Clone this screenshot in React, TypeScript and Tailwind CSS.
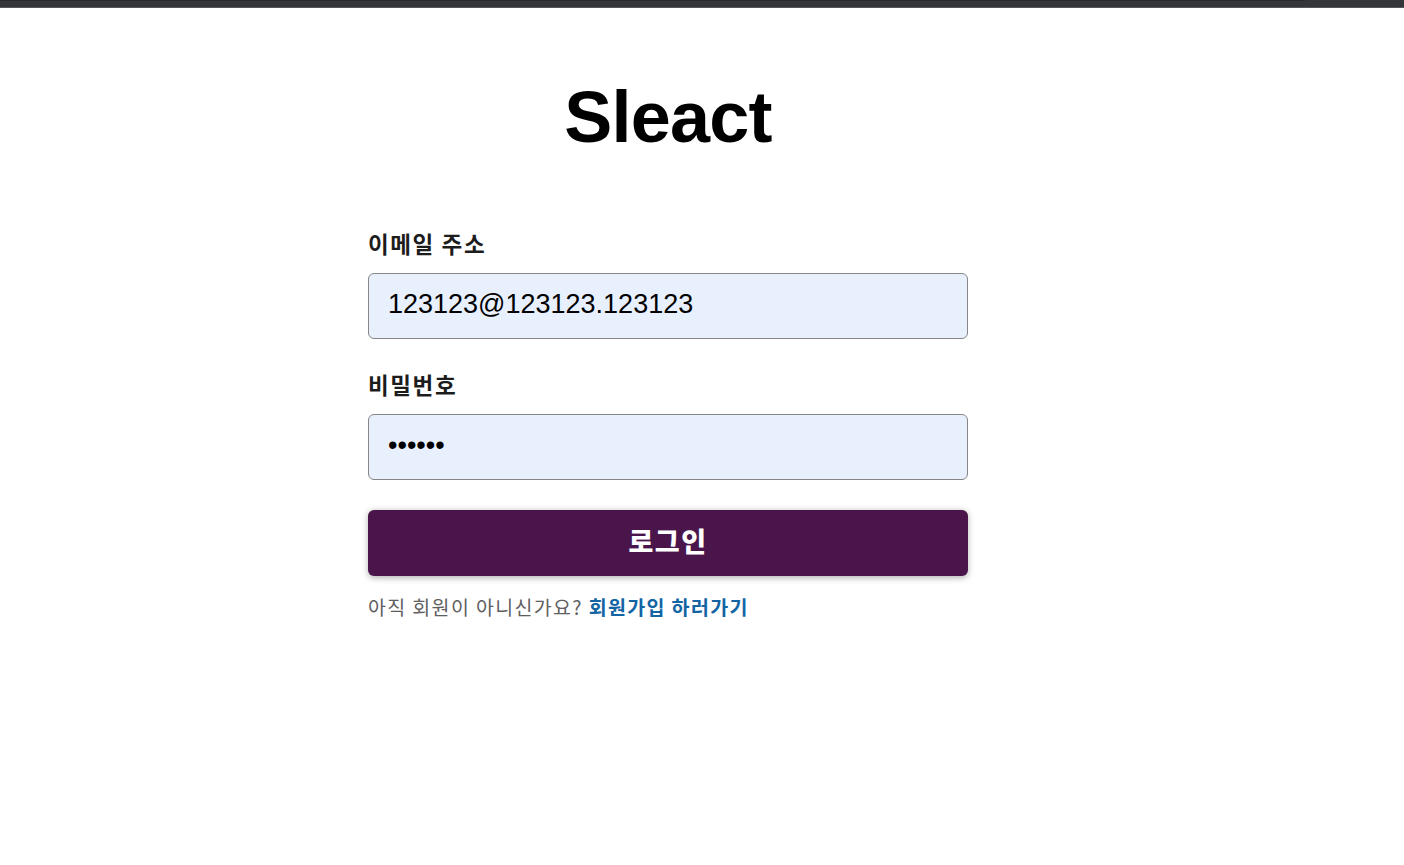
import { useState } from "react"

export default function App() {
  const [email, setEmail] = useState("123123@123123.123123")
  const [password, setPassword] = useState("123123")

  return (
    <div className="min-h-screen w-full bg-white font-['Liberation_Sans','Noto_Sans_CJK_KR',sans-serif]">
      {/* browser chrome edge */}
      <div className="flex h-[7px] flex-col bg-[#35363a]">
        <div className="h-[1px] w-[1305px] bg-[#28292c]" />
      </div>
      <div className="h-[1px] bg-[#55565a]" />

      <div className="w-[1336px]">
        <header className="mt-[75px] mb-[75px] text-center text-[72px] font-bold leading-[69px] tracking-[-0.75px] text-black">
          Sleact
        </header>

        <form className="mx-auto w-[600px]" onSubmit={(e) => e.preventDefault()}>
          <label className="mb-[29px] block">
            <span className="block pb-[13px] text-left text-[22.5px] font-bold leading-[33px] tracking-[1.6px] text-[#1d1c1d] font-['Noto_Sans_CJK_KR',sans-serif]">
              이메일 주소
            </span>
            <input
              type="email"
              value={email}
              onChange={(e) => setEmail(e.target.value)}
              className="box-border h-[66px] w-full rounded-[6px] border border-[#868686] bg-[#e8f0fe] px-[19px] pt-[15px] pb-[19px] text-[27px] leading-[36px] text-black outline-none"
            />
          </label>

          <label className="mb-[30px] block">
            <span className="block pb-[13px] text-left text-[22.5px] font-bold leading-[33px] tracking-[1.6px] text-[#1d1c1d] font-['Noto_Sans_CJK_KR',sans-serif]">
              비밀번호
            </span>
            <input
              type="password"
              value={password}
              onChange={(e) => setPassword(e.target.value)}
              className="box-border h-[66px] w-full rounded-[6px] border border-[#868686] bg-[#e8f0fe] px-[19px] pt-[15px] pb-[19px] text-[27px] leading-[36px] text-black outline-none"
            />
          </label>

          <button
            type="submit"
            className="mb-[17px] flex h-[66px] w-full items-center justify-center rounded-[6px] bg-[#4a154b] pb-[4px] text-[27px] font-black tracking-[1.5px] text-white shadow-[0_1.5px_6px_rgba(0,0,0,0.3)] font-['Noto_Sans_CJK_KR',sans-serif]"
          >
            로그인
          </button>
        </form>

        <div className="mx-auto w-[600px] text-[19.5px] leading-[28px] tracking-[1.35px] text-[#616061] font-['Noto_Sans_CJK_KR',sans-serif]">
          아직 회원이 아니신가요?{" "}
          <a href="#" className="font-bold text-[#1264a3] no-underline">
            회원가입 하러가기
          </a>
        </div>
      </div>
    </div>
  )
}
